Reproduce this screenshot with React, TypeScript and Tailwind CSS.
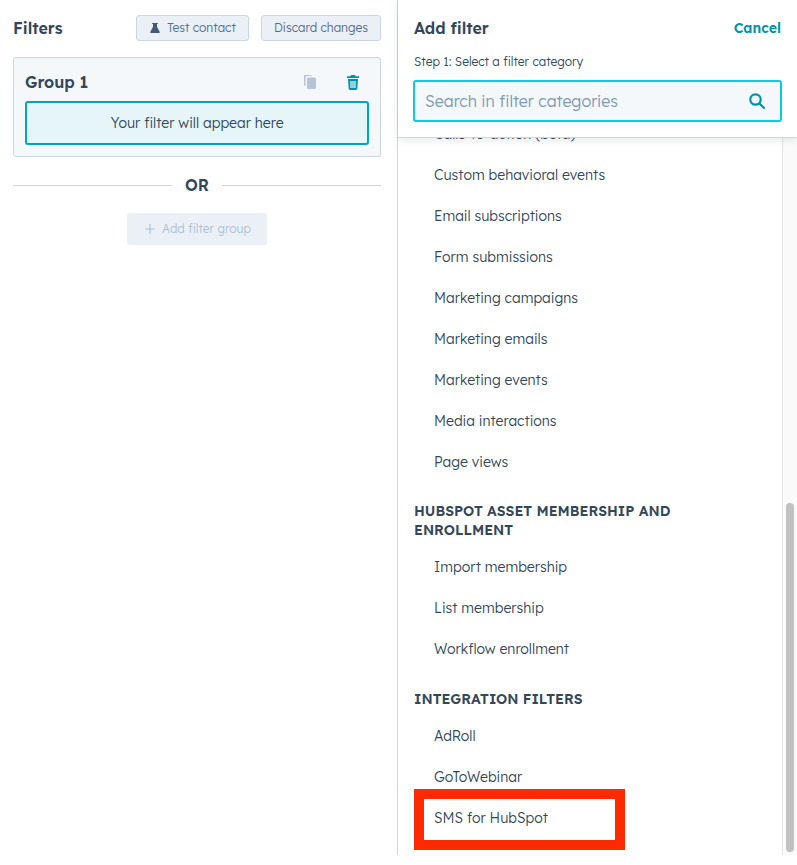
const font = "font-['Lexend_Deca','Lato','Noto_Sans',sans-serif]"

const sections = [
  {
    items: [
      'Calls-to-action (beta)',
      'Custom behavioral events',
      'Email subscriptions',
      'Form submissions',
      'Marketing campaigns',
      'Marketing emails',
      'Marketing events',
      'Media interactions',
      'Page views',
    ],
  },
  {
    title: ['HUBSPOT ASSET MEMBERSHIP AND', 'ENROLLMENT'],
    items: ['Import membership', 'List membership', 'Workflow enrollment'],
  },
  {
    title: ['INTEGRATION FILTERS'],
    items: ['AdRoll', 'GoToWebinar', 'SMS for HubSpot'],
  },
]

function FlaskIcon() {
  return (
    <svg width="12" height="12" viewBox="0 0 12 12" fill="#425b76">
      <path d="M3.2 1h5.6v1.1H8v2.6l2.7 5.2c.2.5-.1 1.1-.7 1.1H2c-.6 0-.9-.6-.7-1.1L4 4.7V2.100H3.200z" />
    </svg>
  )
}

function CopyIcon() {
  return (
    <svg width="12" height="14" viewBox="0 0 12 14" fill="#b6c4d6">
      <path d="M1.500 0H6.500C7.300 0 7.800.4 8 1H3.500C2.300 1 1.500 1.800 1.500 3V11C.6 11 0 10.400 0 9.500V1.500C0 .6.600 0 1.500 0Z" />
      <rect x="3" y="2.500" width="9" height="11.500" rx="1.500" />
    </svg>
  )
}

function TrashIcon() {
  return (
    <svg width="12" height="15" viewBox="0 0 12 15" fill="#0091ae">
      <path d="M4 0h4l.6 1.200H11.500c.3 0 .5.200.5.500V3H0V1.700c0-.3.200-.5.500-.5H3.400z" />
      <path fillRule="evenodd" d="M1 4h10l-.7 9.800c0 .7-.6 1.200-1.200 1.200H2.900c-.6 0-1.200-.5-1.200-1.200zM3.400 6v7h1.200V6zm2 0v7h1.200V6zm2 0v7h1.200V6z" />
    </svg>
  )
}

function SearchIcon() {
  return (
    <svg width="18" height="18" viewBox="0 0 18 18" fill="none" stroke="#0091ae" strokeWidth="2.200" strokeLinecap="round">
      <circle cx="7.500" cy="7.500" r="5.200" />
      <path d="M11.500 11.500 16 16" />
    </svg>
  )
}

function FiltersPanel() {
  return (
    <div className="w-[397px] shrink-0 pl-[13px] pr-[16px]">
      <div className="flex items-center justify-between pt-[15px]">
        <h2 className="text-[16px] leading-[26px] font-semibold text-[#33475b]">Filters</h2>
        <div className="flex gap-3">
          <button className="flex h-[26px] w-[113px] items-center justify-center gap-[6px] rounded-[3px] border border-[#cbd6e2] bg-[#eaf0f6] text-[12px] font-light text-[#506e91]">
            <FlaskIcon />
            Test contact
          </button>
          <button className="h-[26px] w-[120px] rounded-[3px] border border-[#cbd6e2] bg-[#eaf0f6] text-[12px] font-light text-[#506e91]">
            Discard changes
          </button>
        </div>
      </div>

      <div className="mt-[16px] h-[100px] rounded-[3px] border border-[#cbd6e2] bg-[#f5f8fa] px-[11px]">
        <div className="flex h-[43px] items-center pt-[5px]">
          <span className="text-[16px] font-semibold text-[#33475b]">Group 1</span>
          <span className="ml-auto mr-[10px] flex items-center gap-[31px]">
            <CopyIcon />
            <TrashIcon />
          </span>
        </div>
        <div className="flex h-[44px] items-center justify-center rounded-[3px] border-2 border-[#00a4bd] bg-[#e5f5f8] text-[14px] font-light text-[#33475b]">
          Your filter will appear here
        </div>
      </div>

      <div className="mt-[18px] flex items-center">
        <div className="h-px flex-1 bg-[#cbd6e2]" />
        <span className="w-[50px] text-center text-[16px] font-semibold leading-[20px] text-[#33475b]">OR</span>
        <div className="h-px flex-1 bg-[#cbd6e2]" />
      </div>

      <div className="mt-[18px] flex justify-center">
        <button className="flex h-[32px] w-[140px] items-center justify-center gap-[7px] rounded-[3px] bg-[#eaf0f6] pl-[2px] text-[12px] font-light text-[#b0c1d4]">
          <svg width="10" height="10" viewBox="0 0 10 10" stroke="#b0c1d4" strokeWidth="1.200">
            <path d="M5 0v10M0 5h10" />
          </svg>
          Add filter group
        </button>
      </div>
    </div>
  )
}

function CategoryList() {
  return (
    <div className="flex min-w-0 flex-1 flex-col justify-end overflow-hidden pb-[16px]">
      {sections.map((section, i) => (
        <div key={i} className={i === 0 ? '' : i === 1 ? 'mt-[19px]' : 'mt-[20px]'}>
          {section.title && (
            <h3 className="pl-[16px] text-[14px] font-semibold leading-[19px] text-[#33475b]">
              {section.title.map(line => (
                <div key={line}>{line}</div>
              ))}
            </h3>
          )}
          <ul className={section.title ? 'mt-[7px]' : ''}>
            {section.items.map(item => (
              <li key={item} className="relative flex h-[41px] items-center pl-[36px] text-[14px] font-light text-[#33475b]">
                {item}
                {item === 'SMS for HubSpot' && (
                  <div className="absolute left-[16px] top-[-9.500px] h-[61px] w-[211px] border-[10px] border-[#ff2a00]" />
                )}
              </li>
            ))}
          </ul>
        </div>
      ))}
    </div>
  )
}

function AddFilterPanel() {
  return (
    <div className="flex h-[855px] flex-1 flex-col border-l border-[#cbd6e2]">
      <div className="relative z-10 h-[138px] shrink-0 border-b border-[#cbd6e2] bg-white px-[16px] shadow-[0_2px_8px_rgba(45,62,80,0.12)]">
        <div className="flex items-center justify-between pt-[15px]">
          <h2 className="text-[16px] leading-[26px] font-semibold text-[#33475b]">Add filter</h2>
          <button className="text-[14px] font-semibold text-[#0091ae]">Cancel</button>
        </div>
        <p className="mt-[12px] text-[12px] font-light leading-[18px] text-[#33475b]">Step 1: Select a filter category</p>
        <div className="-mx-px mt-[9px] flex h-[42px] items-center justify-between rounded-[3px] border-2 border-[#00d0e4] bg-[#f5f8fa] pl-[10px] pr-[14px]">
          <span className="text-[16px] font-light text-[#7c98b6]">Search in filter categories</span>
          <SearchIcon />
        </div>
      </div>
      <div className="flex min-h-0 flex-1">
        <CategoryList />
        <div className="flex w-[15px] shrink-0 flex-col justify-end border-l border-[#e5e5e5] bg-[#fafafa] pb-[3px] pl-[3px] pr-[3px]">
          <div className="h-[349px] rounded-full bg-[#c1c1c1]" />
        </div>
      </div>
    </div>
  )
}

export default function App() {
  return (
    <div className={`flex h-[865px] w-[797px] overflow-hidden bg-white ${font}`}>
      <FiltersPanel />
      <AddFilterPanel />
    </div>
  )
}
